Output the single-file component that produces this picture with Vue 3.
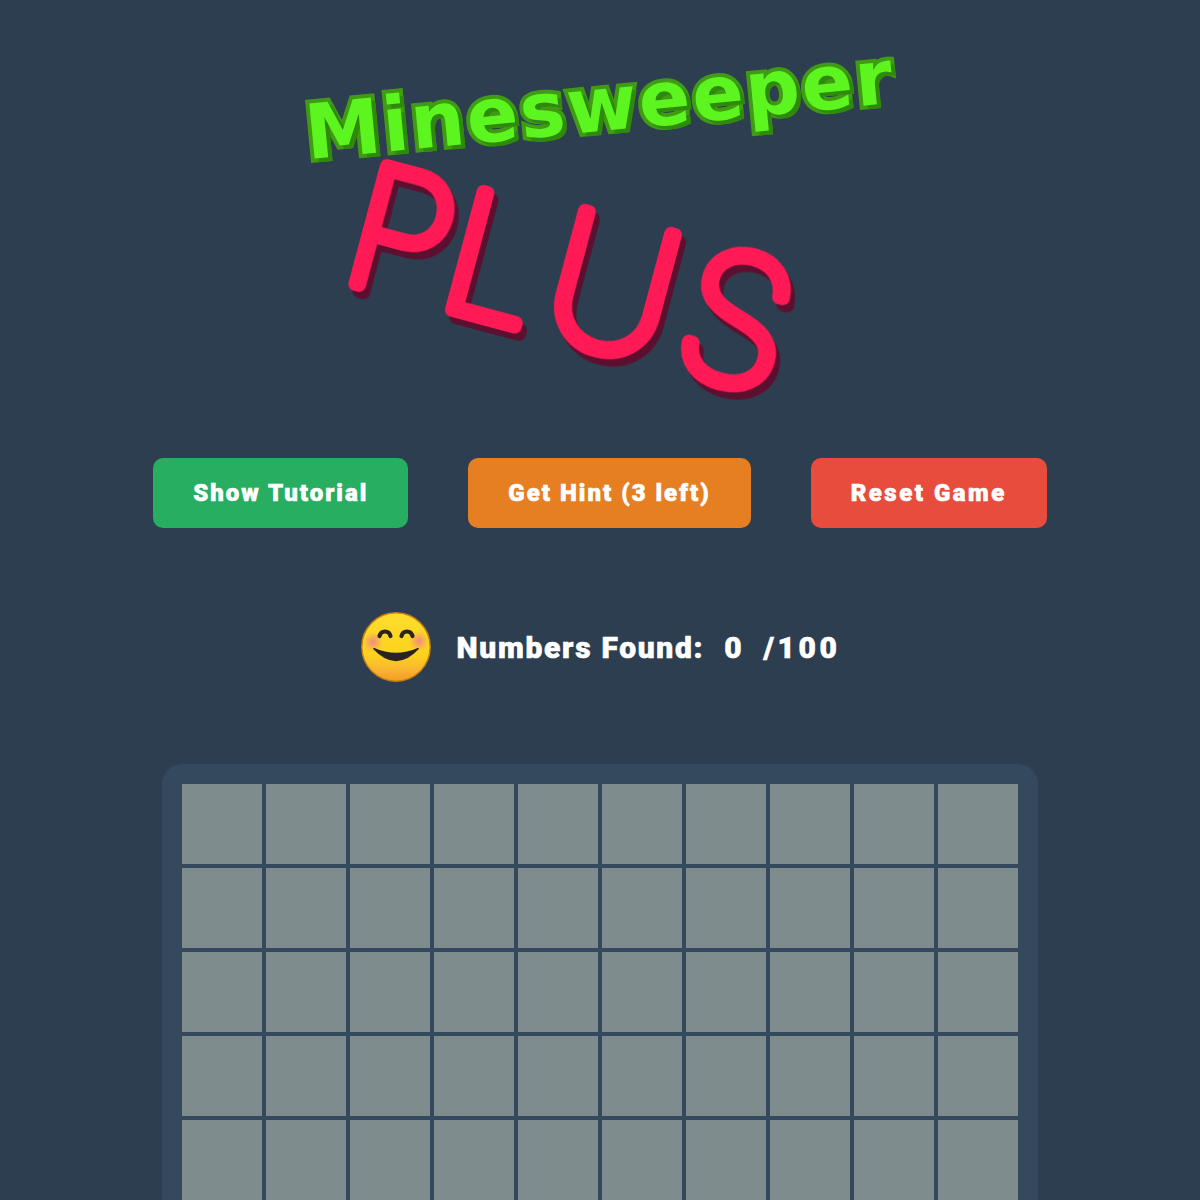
<script setup>
const cells = Array.from({ length: 100 }, (_, i) => i)
const buttons = [
  { label: 'Show Tutorial', tone: 'green' },
  { label: 'Get Hint (3 left)', tone: 'orange' },
  { label: 'Reset Game', tone: 'red' },
]
</script>

<template>
  <main class="page">
    <h1 class="title">
      <span class="mine">Minesweeper</span>
      <svg class="plus" viewBox="0 0 600 260" width="600" height="260">
        <text class="plus-text" x="37" y="124" transform="rotate(15 37 124)">P<tspan dx="-12">L</tspan><tspan class="big" dx="0">US</tspan></text>
      </svg>
    </h1>
    <div class="actions">
      <button v-for="b in buttons" :key="b.label" class="btn" :class="b.tone">{{ b.label }}</button>
    </div>
    <div class="status">
      <svg class="face" viewBox="0 0 74 74" width="74" height="74" role="img" aria-label="smiling face">
        <defs>
          <linearGradient id="skin" x1="0" y1="0" x2="0" y2="1">
            <stop offset="0" stop-color="#ffdd2e" />
            <stop offset="0.62" stop-color="#fcd21c" />
            <stop offset="0.85" stop-color="#f9b233" />
            <stop offset="1" stop-color="#f39a1e" />
          </linearGradient>
          <radialGradient id="cheek">
            <stop offset="0" stop-color="#f0838a" stop-opacity="0.9" />
            <stop offset="1" stop-color="#f0838a" stop-opacity="0" />
          </radialGradient>
        </defs>
        <circle cx="37" cy="37" r="34.2" fill="url(#skin)" stroke="#c77f14" stroke-width="1.4" />
        <circle cx="14" cy="32" r="10" fill="url(#cheek)" />
        <circle cx="60" cy="31" r="10" fill="url(#cheek)" />
        <path class="eye" d="M20.5 26 C22 20 30 20 31.5 26" />
        <path class="eye" d="M42.5 26 C44 20 52 20 53.5 26" />
        <path class="mouth" d="M15 38.7 Q37 48.5 59 38.7 Q37 62 15 38.7 Z" />
      </svg>
      <span class="found"><span>Numbers Found:</span><span>0</span><span class="total">/100</span></span>
    </div>
    <div class="board">
      <div v-for="c in cells" :key="c" class="cell"></div>
    </div>
  </main>
</template>

<style>
html, body { margin: 0; background: #2c3e50; }
</style>

<style scoped>
.page {
  display: flex;
  flex-direction: column;
  align-items: center;
  font-family: Roboto, "Liberation Sans", sans-serif;
  color: #fff;
}
.title {
  margin: 0;
  padding-top: 55px;
  height: 403px;
  display: flex;
  flex-direction: column;
  align-items: center;
}
.mine {
  display: block;
  height: 100px;
  font-family: "DejaVu Sans", sans-serif;
  font-size: 76px;
  line-height: 100px;
  font-weight: 700;
  letter-spacing: 2px;
  color: #5df51f;
  -webkit-text-stroke: 8px #3f9c12;
  paint-order: stroke fill;
  text-shadow: 4px 4px 0 #2f8a0c;
  transform: rotate(-5.5deg);
}
.plus { display: block; overflow: visible; }
.plus-text {
  font-family: Inter, sans-serif;
  font-weight: 100;
  font-size: 168px;
  letter-spacing: 10px;
  fill: #ff1a55;
  stroke: #ff1a55;
  stroke-width: 14px;
  stroke-linejoin: round;
  stroke-linecap: round;
  filter: drop-shadow(6px 6px 0 #5c1030);
}
.big { font-size: 178px; }
.actions { display: flex; gap: 60px; }
.btn {
  height: 70px;
  padding: 0 40px;
  border: 0;
  border-radius: 10px;
  color: #fff;
  font-family: inherit;
  font-size: 24px;
  font-weight: 900;
  letter-spacing: 2px;
  -webkit-text-stroke: 0.6px #fff;
  white-space: nowrap;
}
.green { background: #27ae60; }
.orange { background: #e67e22; }
.red { background: #e74c3c; letter-spacing: 2.5px; }
.status {
  display: flex;
  align-items: center;
  gap: 23px;
  margin-top: 79px;
  height: 80px;
}
.face { display: block; }
.eye { fill: none; stroke: #2a2320; stroke-width: 4.2; stroke-linecap: round; }
.mouth { fill: #2a2320; stroke: #2a2320; stroke-width: 1.6; stroke-linejoin: round; }
.found {
  display: flex;
  gap: 20px;
  font-size: 30px;
  font-weight: 900;
  letter-spacing: 1.7px;
  -webkit-text-stroke: 0.6px #fff;
}
.total { letter-spacing: 3.6px; }
.board {
  margin-top: 77px;
  display: grid;
  grid-template-columns: repeat(10, 80px);
  grid-auto-rows: 80px;
  gap: 4px;
  padding: 20px;
  background: #34495e;
  border-radius: 20px;
}
.cell { background: #7f8c8d; }
</style>
